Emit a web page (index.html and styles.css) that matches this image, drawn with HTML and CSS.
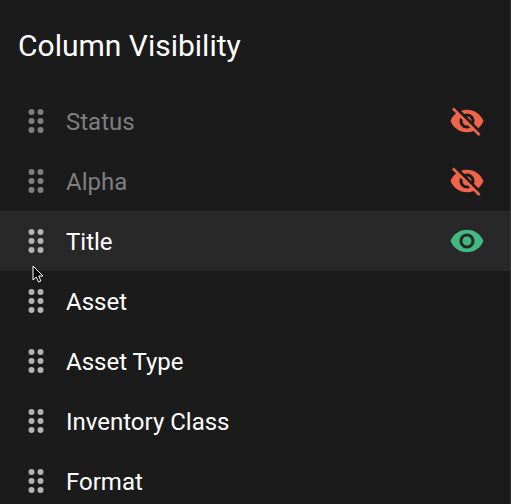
FILE: index.html
```
<!DOCTYPE html>
<html lang="en">
<head>
    <meta charset="UTF-8">
    <meta name="viewport" content="width=device-width, initial-scale=1.0">
    <title>Column Visibility</title>
    <link rel="stylesheet" href="styles.css">
</head>
<body>
    <!-- shared icons -->
    <svg class="sprite" aria-hidden="true">
        <symbol id="grip" viewBox="0 0 24 24">
            <path d="M9 4a2 2 0 1 0 0 4 2 2 0 0 0 0-4zm6 0a2 2 0 1 0 0 4 2 2 0 0 0 0-4zM9 10a2 2 0 1 0 0 4 2 2 0 0 0 0-4zm6 0a2 2 0 1 0 0 4 2 2 0 0 0 0-4zM9 16a2 2 0 1 0 0 4 2 2 0 0 0 0-4zm6 0a2 2 0 1 0 0 4 2 2 0 0 0 0-4z"/>
        </symbol>
        <symbol id="eye" viewBox="0 0 24 24">
            <path d="M12 4.5C7 4.5 2.73 7.61 1 12c1.73 4.39 6 7.5 11 7.5s9.27-3.11 11-7.5c-1.73-4.39-6-7.5-11-7.5zM12 17c-2.76 0-5-2.24-5-5s2.24-5 5-5 5 2.24 5 5-2.24 5-5 5zm0-8c-1.66 0-3 1.34-3 3s1.34 3 3 3 3-1.34 3-3-1.34-3-3-3z"/>
        </symbol>
        <symbol id="eye-off" viewBox="0 0 24 24">
            <path d="M12 7c2.76 0 5 2.24 5 5 0 .65-.13 1.26-.36 1.83l2.92 2.92c1.51-1.26 2.7-2.89 3.43-4.75-1.73-4.39-6-7.5-11-7.5-1.4 0-2.74.25-3.98.7l2.16 2.16C10.74 7.13 11.35 7 12 7zM2 4.27l2.28 2.28.46.46C3.08 8.3 1.78 10.02 1 12c1.73 4.39 6 7.5 11 7.5 1.55 0 3.03-.3 4.38-.84l.42.42L19.73 22 21 20.73 3.27 3 2 4.27zM7.53 9.8l1.55 1.55c-.05.21-.08.43-.08.65 0 1.66 1.34 3 3 3 .22 0 .44-.03.65-.08l1.55 1.55c-.67.33-1.41.53-2.2.53-2.76 0-5-2.24-5-5 0-.79.2-1.53.53-2.2zm4.31-.78l3.15 3.15.02-.16c0-1.66-1.34-3-3-3l-.17.01z"/>
        </symbol>
    </svg>

    <main class="panel">
        <h1 class="panel-title">Column Visibility</h1>
        <ul class="column-list">
            <li class="column hidden">
                <button type="button" class="handle" aria-label="Move Status"><svg class="icon"><use href="#grip"/></svg></button>
                <span class="column-name">Status</span>
                <button type="button" class="toggle" aria-label="Show Status"><svg class="icon"><use href="#eye-off"/></svg></button>
            </li>
            <li class="column hidden">
                <button type="button" class="handle" aria-label="Move Alpha"><svg class="icon"><use href="#grip"/></svg></button>
                <span class="column-name">Alpha</span>
                <button type="button" class="toggle" aria-label="Show Alpha"><svg class="icon"><use href="#eye-off"/></svg></button>
            </li>
            <li class="column active">
                <button type="button" class="handle" aria-label="Move Title"><svg class="icon"><use href="#grip"/></svg></button>
                <span class="column-name">Title</span>
                <button type="button" class="toggle" aria-label="Hide Title"><svg class="icon"><use href="#eye"/></svg></button>
                <svg class="pointer" viewBox="0 0 12 18" aria-hidden="true">
                    <path d="M1 1v14l3.3-3 2.2 5 2.4-1-2.2-5H11z"/>
                </svg>
            </li>
            <li class="column">
                <button type="button" class="handle" aria-label="Move Asset"><svg class="icon"><use href="#grip"/></svg></button>
                <span class="column-name">Asset</span>
            </li>
            <li class="column">
                <button type="button" class="handle" aria-label="Move Asset Type"><svg class="icon"><use href="#grip"/></svg></button>
                <span class="column-name">Asset Type</span>
            </li>
            <li class="column">
                <button type="button" class="handle" aria-label="Move Inventory Class"><svg class="icon"><use href="#grip"/></svg></button>
                <span class="column-name">Inventory Class</span>
            </li>
            <li class="column">
                <button type="button" class="handle" aria-label="Move Format"><svg class="icon"><use href="#grip"/></svg></button>
                <span class="column-name">Format</span>
            </li>
        </ul>
    </main>
</body>
</html>
```
FILE: styles.css
```
* {
    box-sizing: border-box;
}
html {
    background-color: #1b1b1b;
    scrollbar-width: none;
}
body {
    margin: 0;
    font-family: Roboto, Arial, sans-serif;
    color: #fff;
}
.sprite {
    display: none;
}
.panel {
    min-height: 100vh;
    border-right: 1px solid #333;
}
.panel-title {
    margin: 0;
    padding: 28px 18px 27px;
    font-size: 30px;
    font-weight: 400;
    line-height: 36px;
}
.column-list {
    margin: 0;
    padding: 0;
    list-style: none;
}
.column {
    position: relative;
    display: flex;
    align-items: center;
    height: 60px;
    padding: 0 25px 0 18px;
}
.column.active {
    background-color: #282828;
}
.column-name {
    flex: 1;
    margin-left: 12px;
    padding-top: 2px;
    font-size: 24px;
    line-height: 32px;
}
.hidden .column-name {
    color: #7f7f7f;
}
.icon {
    display: block;
    width: 36px;
    height: 36px;
    fill: currentColor;
}
.handle,
.toggle {
    padding: 0;
    border: none;
    background: none;
    cursor: pointer;
}
.handle {
    color: #b3b3b3;
    cursor: grab;
}
.hidden .handle {
    color: #7f7f7f;
}
.toggle {
    color: #42b983;
}
.hidden .toggle {
    color: #f0654a;
}
/* mouse pointer over the list */
.pointer {
    position: absolute;
    z-index: 1;
    top: 54px;
    left: 32px;
    width: 12px;
    height: 18px;
    fill: #000;
    stroke: #fff;
    stroke-width: 1;
}
```
